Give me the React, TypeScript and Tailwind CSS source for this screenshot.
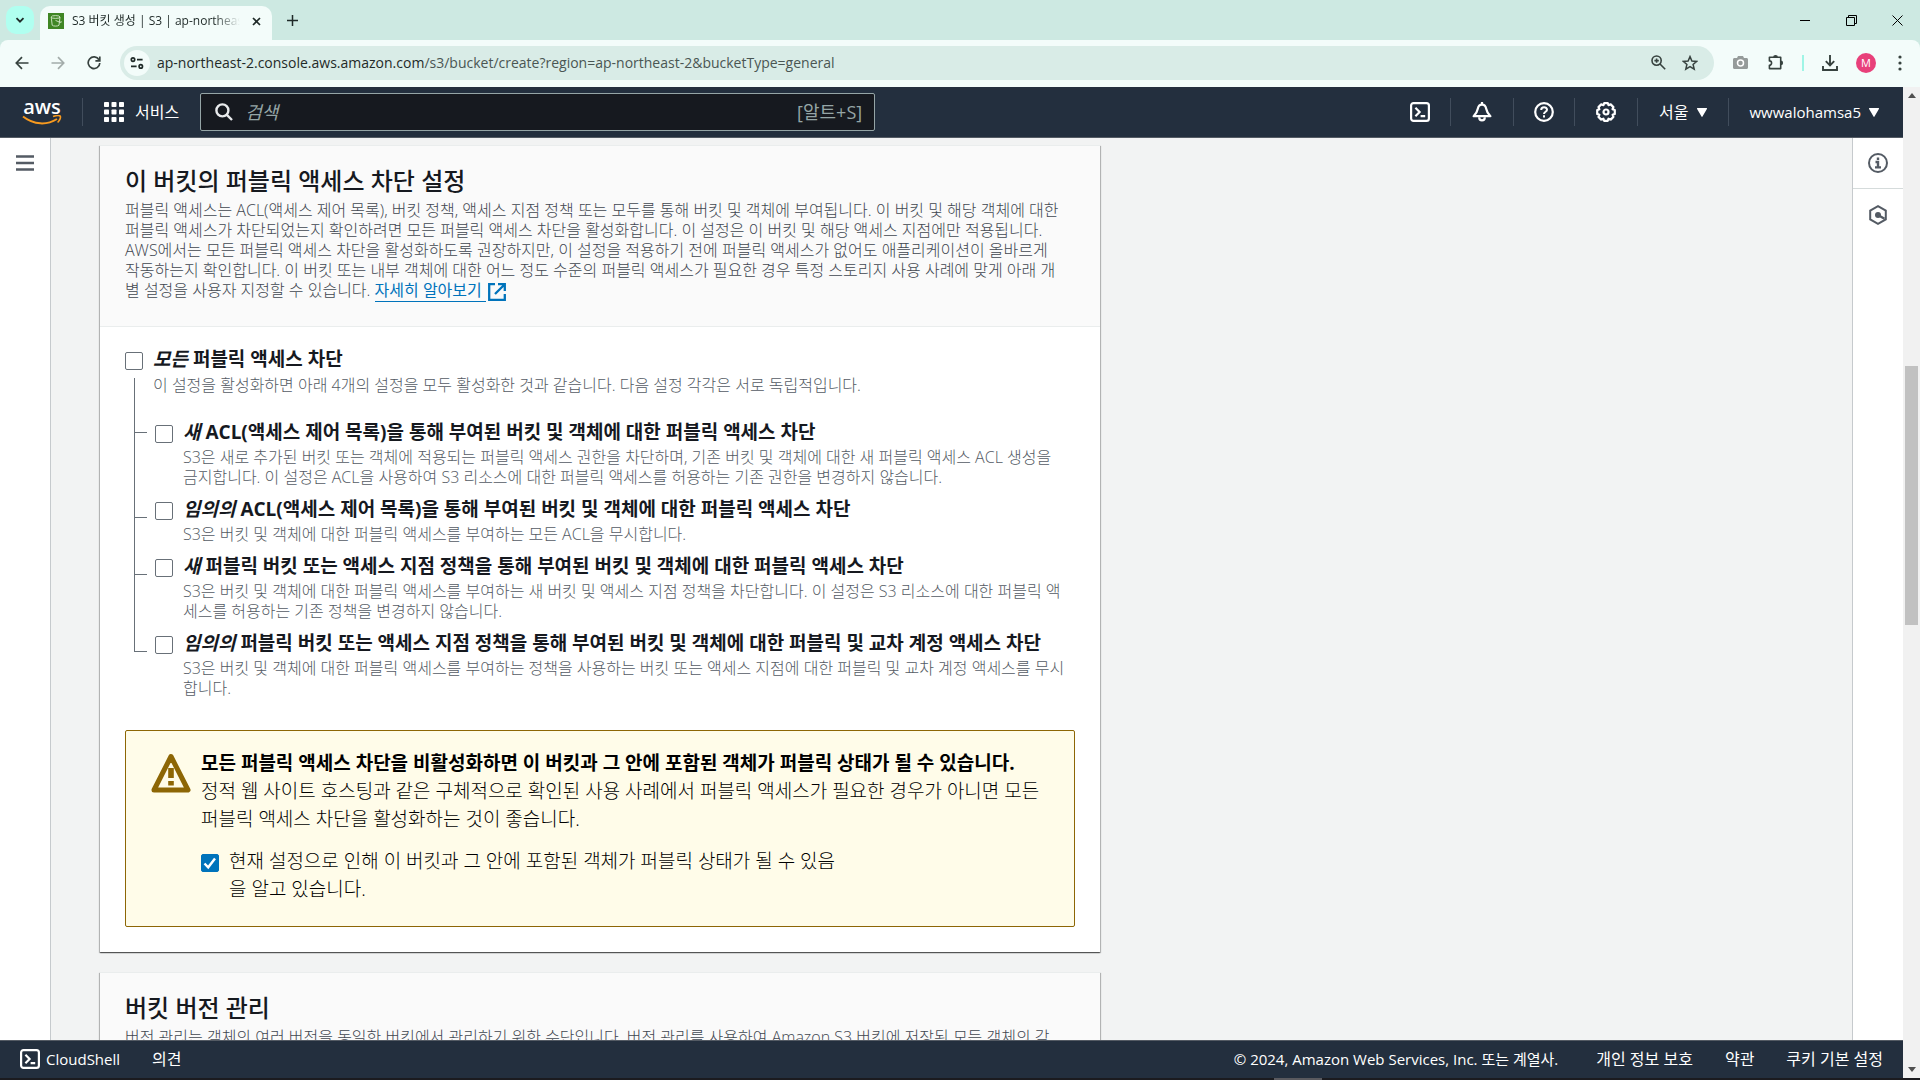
import { useState, type ReactNode } from 'react';

interface AccessOption {
  id: string;
  emphasis: string;
  label: string;
  description: string;
  tickClass: string;
}

const ACCESS_OPTIONS: AccessOption[] = [
  {
    id: 'new-acl',
    emphasis: '새',
    label: 'ACL(액세스 제어 목록)을 통해 부여된 버킷 및 객체에 대한 퍼블릭 액세스 차단',
    description:
      'S3은 새로 추가된 버킷 또는 객체에 적용되는 퍼블릭 액세스 권한을 차단하며, 기존 버킷 및 객체에 대한 새 퍼블릭 액세스 ACL 생성을\n금지합니다. 이 설정은 ACL을 사용하여 S3 리소스에 대한 퍼블릭 액세스를 허용하는 기존 권한을 변경하지 않습니다.',
    tickClass: 'mt-3',
  },
  {
    id: 'any-acl',
    emphasis: '임의의',
    label: 'ACL(액세스 제어 목록)을 통해 부여된 버킷 및 객체에 대한 퍼블릭 액세스 차단',
    description: 'S3은 버킷 및 객체에 대한 퍼블릭 액세스를 부여하는 모든 ACL을 무시합니다.',
    tickClass: 'mt-5',
  },
  {
    id: 'new-policy',
    emphasis: '새',
    label: '퍼블릭 버킷 또는 액세스 지점 정책을 통해 부여된 버킷 및 객체에 대한 퍼블릭 액세스 차단',
    description:
      'S3은 버킷 및 객체에 대한 퍼블릭 액세스를 부여하는 새 버킷 및 액세스 지점 정책을 차단합니다. 이 설정은 S3 리소스에 대한 퍼블릭 액\n세스를 허용하는 기존 정책을 변경하지 않습니다.',
    tickClass: 'mt-5',
  },
  {
    id: 'any-policy',
    emphasis: '임의의',
    label: '퍼블릭 버킷 또는 액세스 지점 정책을 통해 부여된 버킷 및 객체에 대한 퍼블릭 및 교차 계정 액세스 차단',
    description:
      'S3은 버킷 및 객체에 대한 퍼블릭 액세스를 부여하는 정책을 사용하는 버킷 또는 액세스 지점에 대한 퍼블릭 및 교차 계정 액세스를 무시\n합니다.',
    tickClass: 'mt-5',
  },
];

const BLOCK_DESCRIPTION = `퍼블릭 액세스는 ACL(액세스 제어 목록), 버킷 정책, 액세스 지점 정책 또는 모두를 통해 버킷 및 객체에 부여됩니다. 이 버킷 및 해당 객체에 대한
퍼블릭 액세스가 차단되었는지 확인하려면 모든 퍼블릭 액세스 차단을 활성화합니다. 이 설정은 이 버킷 및 해당 액세스 지점에만 적용됩니다.
AWS에서는 모든 퍼블릭 액세스 차단을 활성화하도록 권장하지만, 이 설정을 적용하기 전에 퍼블릭 액세스가 없어도 애플리케이션이 올바르게
작동하는지 확인합니다. 이 버킷 또는 내부 객체에 대한 어느 정도 수준의 퍼블릭 액세스가 필요한 경우 특정 스토리지 사용 사례에 맞게 아래 개
별 설정을 사용자 지정할 수 있습니다. `;

const VERSIONING_DESCRIPTION = `버전 관리는 객체의 여러 버전을 동일한 버킷에서 관리하기 위한 수단입니다. 버전 관리를 사용하여 Amazon S3 버킷에 저장된 모든 객체의 각
버전을 보존, 검색 및 복원할 수 있습니다.`;

function Checkbox({ id, defaultChecked = false }: { id: string; defaultChecked?: boolean }) {
  const [checked, setChecked] = useState(defaultChecked);
  return (
    <span className="relative block w-[18px] h-[18px] shrink-0">
      <input
        id={id}
        type="checkbox"
        checked={checked}
        onChange={(e) => setChecked(e.target.checked)}
        className="block w-[18px] h-[18px] appearance-none rounded-[2px] border border-[#687078] bg-white checked:border-[#0073bb] checked:bg-[#0073bb]"
      />
      {checked && (
        <svg viewBox="0 0 18 18" className="absolute inset-0 pointer-events-none" fill="none" stroke="#fff" strokeWidth="2.4">
          <path d="M3.5 9.5l3.7 3.8L14 4.5" />
        </svg>
      )}
    </span>
  );
}

function ShellIcon() {
  return (
    <svg width="20" height="20" viewBox="0 0 20 20" fill="none" stroke="currentColor" strokeWidth="2.2">
      <rect x="1.1" y="1.1" width="17.8" height="17.8" rx="2.4" />
      <path d="M5.4 5.8l4.2 4.2-4.2 4.2M10.6 14.2h4.6" />
    </svg>
  );
}

function BrowserChrome() {
  return (
    <div className="shrink-0 bg-[#cde9e2] text-[#1f2a28]">
      <div className="flex h-10 items-end pl-1.5">
        <button aria-label="탭 검색" className="mb-1.5 flex h-7 w-7 items-center justify-center rounded-[10px] bg-[#b0fff0]">
          <svg width="10" height="10" viewBox="0 0 10 10" fill="none" stroke="currentColor" strokeWidth="1.8">
            <path d="M1.5 3.2L5 6.7l3.5-3.5" />
          </svg>
        </button>
        <div className="ml-1.5 flex h-[34px] w-[232px] items-center rounded-t-[10px] bg-[#f3fcfa] pb-1 pl-2 pr-2">
          <svg width="16" height="16" viewBox="0 0 16 16" className="shrink-0">
            <rect width="16" height="16" fill="#3f8624" />
            <g fill="none" stroke="#d5eac9" strokeWidth="0.9">
              <ellipse cx="7.6" cy="4" rx="4.4" ry="1.4" />
              <path d="M3.2 4l1 8.2c.8 1.2 6 1.2 6.8 0L12 4M7.5 7.4l4.6 2c1.4.5 1.6-.6.3-1.5" />
            </g>
          </svg>
          <span className="ml-2 flex-1 overflow-hidden whitespace-nowrap text-[12px] leading-5 [mask-image:linear-gradient(to_right,black_85%,transparent)]">
            S3 버킷 생성 | S3 | ap-northeast-2
          </span>
          <button aria-label="탭 닫기" className="ml-2 flex h-4 w-4 items-center justify-center">
            <svg width="9" height="9" viewBox="0 0 9 9" stroke="currentColor" strokeWidth="1.7">
              <path d="M1 1l7 7M8 1L1 8" />
            </svg>
          </button>
        </div>
        <button aria-label="새 탭" className="mb-2.5 ml-2.5 flex h-5 w-5 items-center justify-center">
          <svg width="11" height="11" viewBox="0 0 11 11" stroke="currentColor" strokeWidth="1.5">
            <path d="M5.5 0v11M0 5.5h11" />
          </svg>
        </button>
        <div className="ml-auto flex h-10 items-center text-black">
          <button aria-label="최소화" className="flex w-[46px] justify-center">
            <svg width="10" height="10" stroke="currentColor"><path d="M0 5.5h10" /></svg>
          </button>
          <button aria-label="이전 크기로 복원" className="flex w-[46px] justify-center">
            <svg width="11" height="11" viewBox="0 0 11 11" fill="none" stroke="currentColor">
              <path d="M.5 2.5h8v8h-8zM2.5 2.5v-2h8v8h-2" />
            </svg>
          </button>
          <button aria-label="닫기" className="flex w-[46px] justify-center">
            <svg width="11" height="11" viewBox="0 0 11 11" stroke="currentColor"><path d="M.5.5l10 10M10.5.5l-10 10" /></svg>
          </button>
        </div>
      </div>
      <div className="flex h-[47px] items-center rounded-t-[8px] bg-[#f3fcfa] px-3 pb-0.5 text-[#37423f]">
        <button aria-label="뒤로" className="flex w-5 justify-center">
          <svg width="14" height="14" viewBox="0 0 14 14" fill="none" stroke="currentColor" strokeWidth="1.7">
            <path d="M13.5 7H1.5M7 1.2L1.3 7 7 12.8" />
          </svg>
        </button>
        <button aria-label="앞으로" className="ml-4 flex w-5 justify-center text-[#a3acaa]">
          <svg width="14" height="14" viewBox="0 0 14 14" fill="none" stroke="currentColor" strokeWidth="1.7">
            <path d="M.5 7h12M7 1.2L12.7 7 7 12.8" />
          </svg>
        </button>
        <button aria-label="새로고침" className="ml-4 flex w-5 justify-center">
          <svg width="14" height="14" viewBox="0 0 14 14" fill="none" stroke="currentColor" strokeWidth="1.7">
            <path d="M12 3.8A5.8 5.8 0 1 0 12.8 7" />
            <path d="M12.8.4v4.4H8.4" />
          </svg>
        </button>
        <div className="ml-4 flex h-[34px] flex-1 items-center rounded-full bg-[#d9ece7] pl-1 pr-4">
          <span className="flex h-[26px] w-[26px] shrink-0 items-center justify-center rounded-full bg-[#f3fcfa]">
            <svg width="14" height="12" viewBox="0 0 14 12" fill="none" stroke="#1f2a28" strokeWidth="1.7">
              <circle cx="3" cy="2.6" r="1.7" />
              <path d="M7 2.6h5.6M1 9.4h5.6" />
              <circle cx="10.8" cy="9.4" r="1.7" />
            </svg>
          </span>
          <span className="ml-[7px] flex-1 whitespace-nowrap text-[14px] leading-5 text-[#4a5653]">
            <span className="text-[#1f2a28]">ap-northeast-2.console.aws.amazon.com</span>
            /s3/bucket/create?region=ap-northeast-2&amp;bucketType=general
          </span>
          <button aria-label="확대/축소" className="flex w-4 justify-center">
            <svg width="15" height="15" viewBox="0 0 15 15" fill="none" stroke="currentColor" strokeWidth="1.6">
              <circle cx="5.6" cy="5.6" r="4.6" />
              <path d="M9 9l5.2 5.2M5.6 3.4v4.4M3.4 5.6h4.4" />
            </svg>
          </button>
          <button aria-label="북마크" className="ml-4 flex w-4 justify-center">
            <svg width="16" height="16" viewBox="0 0 16 16" fill="none" stroke="currentColor" strokeWidth="1.5">
              <path d="M8 1.6l1.9 4.4 4.8.4-3.6 3.1 1.1 4.7L8 11.7l-4.2 2.5 1.1-4.7L1.3 6.4l4.8-.4z" />
            </svg>
          </button>
        </div>
        <button aria-label="캡처" className="ml-[18px] flex w-4 justify-center">
          <svg width="15" height="13" viewBox="0 0 15 13">
            <path d="M1.5 2H4l1-2h5l1 2h2.5c.9 0 1.5.6 1.5 1.5v8c0 .9-.6 1.5-1.5 1.5h-12C.6 13 0 12.4 0 11.5v-8C0 2.6.6 2 1.5 2z" fill="#959b9a" />
            <circle cx="7.5" cy="7" r="3" fill="none" stroke="#fff" strokeWidth="1.5" />
          </svg>
        </button>
        <button aria-label="확장 프로그램" className="ml-5 flex w-4 justify-center">
          <svg width="17" height="17" viewBox="0 0 17 17" fill="none" stroke="currentColor" strokeWidth="1.7">
            <path d="M1.5 3h12v12h-12v-3.6a2.2 2.2 0 0 0 0-4.6z" strokeLinejoin="round" />
            <path d="M6.3 3a1.7 1.7 0 0 1 3.4 0M13.5 7.3a1.7 1.7 0 0 1 0 3.4" fill="currentColor" />
          </svg>
        </button>
        <span className="ml-[18px] h-4 w-0.5 bg-[#9ff5e6]" />
        <button aria-label="다운로드" className="ml-[18px] flex w-4 justify-center">
          <svg width="16" height="16" viewBox="0 0 16 16" fill="none" stroke="currentColor" strokeWidth="1.9">
            <path d="M8 0v10M3.8 6.2L8 10.4l4.2-4.2M1 11v4h14v-4" />
          </svg>
        </button>
        <button aria-label="프로필" className="ml-[18px] flex h-5 w-5 items-center justify-center rounded-full bg-[#e8407a] text-[11px] leading-4 text-white">
          M
        </button>
        <button aria-label="메뉴" className="ml-4 flex w-4 justify-center">
          <svg width="4" height="16" viewBox="0 0 4 16" fill="currentColor">
            <circle cx="2" cy="2" r="1.6" />
            <circle cx="2" cy="8" r="1.6" />
            <circle cx="2" cy="14" r="1.6" />
          </svg>
        </button>
      </div>
    </div>
  );
}

function Divider() {
  return <span className="h-7 w-px shrink-0 bg-[#414d5c]" />;
}

function Caret() {
  return (
    <svg width="10" height="9" viewBox="0 0 10 9" fill="currentColor">
      <path d="M.6 0h8.8c.5 0 .8.5.5.9L5.5 8.6c-.2.4-.8.4-1 0L.1.9C-.2.5.1 0 .6 0z" />
    </svg>
  );
}

function ConsoleHeader() {
  return (
    <header className="flex h-[51px] shrink-0 items-center border-b border-[#545b64] bg-[#232f3e] pl-[22px] pr-6 text-white">
      <a href="#home" aria-label="AWS" className="flex w-10 flex-col items-center">
        <span className="text-[20px] font-semibold leading-4">aws</span>
        <svg width="40" height="11" viewBox="0 0 40 11" fill="none" stroke="#f79a1f" strokeWidth="2">
          <path d="M1 1.5c11 8.6 24 8.8 34 2.5" />
          <path d="M31 1.6c3-1 6.5-1.2 7.2-.5.8.9-.3 4.4-2.6 6.4" strokeWidth="1.6" />
        </svg>
      </a>
      <span className="ml-5 h-7 w-px bg-[#414d5c]" />
      <button className="ml-[21px] flex items-center gap-[11px] text-[16px] leading-5">
        <svg width="20" height="20" viewBox="0 0 20 20" fill="currentColor">
          {[0, 7.5, 15].map((y) =>
            [0, 7.5, 15].map((x) => <rect key={`${x}-${y}`} x={x} y={y} width="5" height="5" rx="0.8" />)
          )}
        </svg>
        서비스
      </button>
      <div className="ml-[21px] flex h-[38px] w-[675px] items-center rounded-[2px] border border-[#95a5a6] bg-[#16191f] pl-3.5 pr-3">
        <svg width="18" height="18" viewBox="0 0 18 18" fill="none" stroke="#e9ebed" strokeWidth="2.4">
          <circle cx="7.4" cy="7.4" r="6" />
          <path d="M11.6 11.6l5.4 5.4" />
        </svg>
        <input
          type="text"
          aria-label="검색"
          placeholder="검색"
          className="ml-3 min-w-0 flex-1 bg-transparent text-[18px] italic leading-6 outline-none placeholder:text-[#95a5a6]"
        />
        <span className="text-[18px] leading-6 text-[#95a5a6]">[알트+S]</span>
      </div>
      <div className="ml-auto flex items-center">
        <button aria-label="CloudShell" className="mr-5">
          <ShellIcon />
        </button>
        <Divider />
        <button aria-label="알림" className="mx-[21px]">
          <svg width="20" height="20" viewBox="0 0 20 20" fill="none" stroke="currentColor" strokeWidth="2.2" strokeLinejoin="round">
            <path d="M10 2.6c-2.6 0-3.8 1.8-4.2 4.2-.5 3-1.8 5-4.2 7.4h16.8c-2.4-2.4-3.7-4.4-4.2-7.4-.4-2.4-1.600-4.200-4.200-4.200z" />
            <path d="M10 0v3M7.200 15.200c0 1.800 1.200 3.200 2.800 3.200s2.800-1.400 2.800-3.200" />
          </svg>
        </button>
        <Divider />
        <button aria-label="도움말" className="mx-5">
          <svg width="20" height="20" viewBox="0 0 20 20" fill="none" stroke="currentColor" strokeWidth="2.2">
            <circle cx="10" cy="10" r="8.8" />
            <path d="M7.2 8c0-3.6 5.8-3.6 5.800-.2 0 2-3 2-3 4.200M10 13.200v2.200" strokeWidth="2" />
          </svg>
        </button>
        <Divider />
        <button aria-label="설정" className="mx-[21px]">
          <svg width="20" height="20" viewBox="0 0 20 20" fill="none" stroke="currentColor" strokeWidth="2.2" strokeLinejoin="round">
            <path d="M8.2 1.2h3.6l.7 1.9 2.2-.7 2.7 2.7-.9 2.1 2.3.9v3.8l-2.2.8.8 2.2-2.7 2.7-2.2-.9-.8 2.1H8.2l-.8-2.1-2.2.9-2.7-2.7.9-2.2-2.2-.8V8.1l2.2-.8-.9-2.2 2.7-2.7 2.3.8z" />
            <circle cx="10" cy="10" r="2.5" />
          </svg>
        </button>
        <Divider />
        <button className="mx-[21px] flex items-center gap-2 text-[16px] leading-5">
          서울 <Caret />
        </button>
        <Divider />
        <button className="ml-[21px] flex items-center gap-2 text-[15px] font-medium leading-5">
          wwwalohamsa5 <Caret />
        </button>
      </div>
    </header>
  );
}

function Card({ title, description, children }: { title: string; description: ReactNode; children?: ReactNode }) {
  return (
    <section className="max-w-[1000px] border-t border-[#eaeded] bg-white shadow-[0_1px_1px_0_rgba(0,0,0,0.45),1px_1px_1px_0_rgba(0,0,0,0.2),-1px_1px_1px_0_rgba(0,0,0,0.2)]">
      <div className="border-b border-[#eaeded] bg-[#fafafa] px-[25px] pb-[25px] pt-[18px]">
        <h2 className="text-[24px] font-medium leading-[34px] text-[#16191f]">{title}</h2>
        <p className="mt-0.5 whitespace-pre-line text-[16px] font-light leading-5 text-[#414750]">{description}</p>
      </div>
      {children}
    </section>
  );
}

function PublicAccessSettings() {
  return (
    <div className="px-[25px] pb-[25px] pt-5">
      <div className="flex">
        <div className="flex w-7 shrink-0 flex-col pt-[5px]">
          <Checkbox id="block-all" />
          <span className="mb-[46px] ml-[9px] mt-2 w-px flex-1 bg-[#687078]" />
        </div>
        <div className="min-w-0 flex-1">
          <label htmlFor="block-all" className="block text-[19px] font-bold leading-6 text-[#16191f]">
            <em>모든</em> 퍼블릭 액세스 차단
          </label>
          <p className="mt-1 text-[16px] font-light leading-5 text-[#545b64]">
            이 설정을 활성화하면 아래 4개의 설정을 모두 활성화한 것과 같습니다. 다음 설정 각각은 서로 독립적입니다.
          </p>
          <ul className="mt-[25px] flex flex-col gap-2.5">
            {ACCESS_OPTIONS.map((option) => (
              <li key={option.id} className="flex">
                <span className={`-ml-[18px] mr-2 h-px w-3 shrink-0 bg-[#687078] ${option.tickClass}`} />
                <span className="mt-[5px]">
                  <Checkbox id={option.id} />
                </span>
                <div className="ml-2.5 min-w-0 flex-1">
                  <label htmlFor={option.id} className="block whitespace-nowrap text-[19px] font-bold leading-6 text-[#16191f]">
                    <em>{option.emphasis}</em> {option.label}
                  </label>
                  <p className="mt-[3px] whitespace-pre-line text-[16px] font-light leading-5 text-[#545b64]">{option.description}</p>
                </div>
              </li>
            ))}
          </ul>
        </div>
      </div>

      <div className="mt-8 flex rounded-[2px] border border-[#8d6605] bg-[#fffce9] px-[25px] pb-[23px] pt-[18px]">
        <svg width="40" height="40" viewBox="0 0 40 40" className="mt-1 shrink-0">
          <path d="M20 3.5L37 37H3z" fill="none" stroke="#8d6605" strokeWidth="5" strokeLinejoin="round" />
          <path d="M17.2 15h5.6v10h-5.6zM17.2 28h5.6v4.4h-5.6z" fill="#8d6605" />
        </svg>
        <div className="ml-2.5 min-w-0 flex-1 text-[19px] font-light leading-7 text-black">
          <p className="font-bold">
            모든 퍼블릭 액세스 차단을 비활성화하면 이 버킷과 그 안에 포함된 객체가 퍼블릭 상태가 될 수 있습니다.
          </p>
          <p>
            정적 웹 사이트 호스팅과 같은 구체적으로 확인된 사용 사례에서 퍼블릭 액세스가 필요한 경우가 아니면 모든 퍼블릭 액세스 차단을 활성화하는 것이 좋습니다.
          </p>
          <div className="mt-3.5 flex">
            <span className="mt-[7px]">
              <Checkbox id="acknowledge" defaultChecked />
            </span>
            <label htmlFor="acknowledge" className="ml-2.5 max-w-[615px]">
              현재 설정으로 인해 이 버킷과 그 안에 포함된 객체가 퍼블릭 상태가 될 수 있음을 알고 있습니다.
            </label>
          </div>
        </div>
      </div>
    </div>
  );
}

function ConsoleFooter() {
  return (
    <footer className="flex h-[38px] shrink-0 items-center border-t border-[#545b64] bg-[#232f3e] px-5 pb-0.5 text-[16px] leading-5 text-white">
      <button className="flex items-center gap-1.5 text-[15px] font-medium">
        <ShellIcon />
        CloudShell
      </button>
      <button className="ml-8">의견</button>
      <span className="ml-auto text-[15px]">© 2024, Amazon Web Services, Inc. 또는 계열사.</span>
      <a href="#privacy" className="ml-[38px]">개인 정보 보호</a>
      <a href="#terms" className="ml-8">약관</a>
      <a href="#cookies" className="ml-8">쿠키 기본 설정</a>
    </footer>
  );
}

export default function App() {
  return (
    <div className="flex h-screen flex-col overflow-hidden font-['Open_Sans','Noto_Sans_CJK_KR',sans-serif]">
      <BrowserChrome />
      <div className="flex min-h-0 flex-1">
        <div className="flex min-w-0 flex-1 flex-col">
          <ConsoleHeader />
          <div className="flex min-h-0 flex-1">
            <nav className="w-[51px] shrink-0 border-r border-[#c6cacd] bg-white pl-4 pt-[17px]">
              <button aria-label="탐색 메뉴 열기" className="block text-[#545b64]">
                <svg width="18" height="16" viewBox="0 0 18 16" stroke="currentColor" strokeWidth="2.4">
                  <path d="M0 1.5h18M0 8h18M0 14.5h18" />
                </svg>
              </button>
            </nav>
            <main className="flex min-w-0 flex-1 flex-col gap-5 overflow-hidden bg-[#f2f3f3] pl-[49px] pt-[7px] *:shrink-0">
              <Card
                title="이 버킷의 퍼블릭 액세스 차단 설정"
                description={
                  <>
                    {BLOCK_DESCRIPTION}
                    <a href="#learn-more" className="font-normal text-[#0073bb]">
                      <span className="border-b border-[#0073bb] pr-1">자세히 알아보기</span>
                      <svg width="18" height="18" viewBox="0 0 18 18" fill="none" stroke="currentColor" strokeWidth="2.3" className="ml-0.5 inline-block align-text-bottom">
                        <path d="M7 1.2H1.2v15.6h15.6V11M10 1.2h6.8V8M16.8 1.2L7 11" />
                      </svg>
                    </a>
                  </>
                }
              >
                <PublicAccessSettings />
              </Card>
              <Card title="버킷 버전 관리" description={VERSIONING_DESCRIPTION} />
            </main>
            <aside className="flex w-[51px] shrink-0 flex-col border-l border-[#c6cacd] bg-white text-[#545b64]">
              <button aria-label="정보" className="flex h-[51px] items-center justify-center border-b border-[#d5dbdb]">
                <svg width="20" height="20" viewBox="0 0 20 20" fill="none" stroke="currentColor" strokeWidth="2">
                  <circle cx="10" cy="10" r="9" />
                  <path d="M10 4.5v2.4M7.5 9H10v5.4M7 14.4h6" strokeWidth="2.4" />
                </svg>
              </button>
              <button aria-label="진단" className="flex h-[51px] items-center justify-center">
                <svg width="20" height="20" viewBox="0 0 20 20" fill="none" stroke="currentColor" strokeWidth="2">
                  <path d="M10 1.2l7.8 4.4v8.8L10 18.8l-7.8-4.4V5.6z" />
                  <circle cx="10" cy="10" r="3" fill="currentColor" stroke="none" />
                  <path d="M10 10l6.5 3.8" strokeWidth="2.4" />
                </svg>
              </button>
            </aside>
          </div>
          <ConsoleFooter />
        </div>
        {/* Page scrollbar */}
        <div className="flex w-[17px] shrink-0 flex-col items-center bg-[#f1f1f1] py-1.5">
          <svg width="8" height="5" viewBox="0 0 8 5" fill="#505050"><path d="M0 5l4-5 4 5z" /></svg>
          <div className="mt-[268px] h-[259px] w-[13px] bg-[#c1c1c1]" />
          <svg width="8" height="5" viewBox="0 0 8 5" fill="#505050" className="mt-auto"><path d="M0 0l4 5 4-5z" /></svg>
        </div>
      </div>
      <div className="flex h-0.5 shrink-0 justify-end bg-[#1b1b1f] pr-[598px]">
        <span className="w-12 bg-[#5a5a5f]" />
      </div>
    </div>
  );
}
